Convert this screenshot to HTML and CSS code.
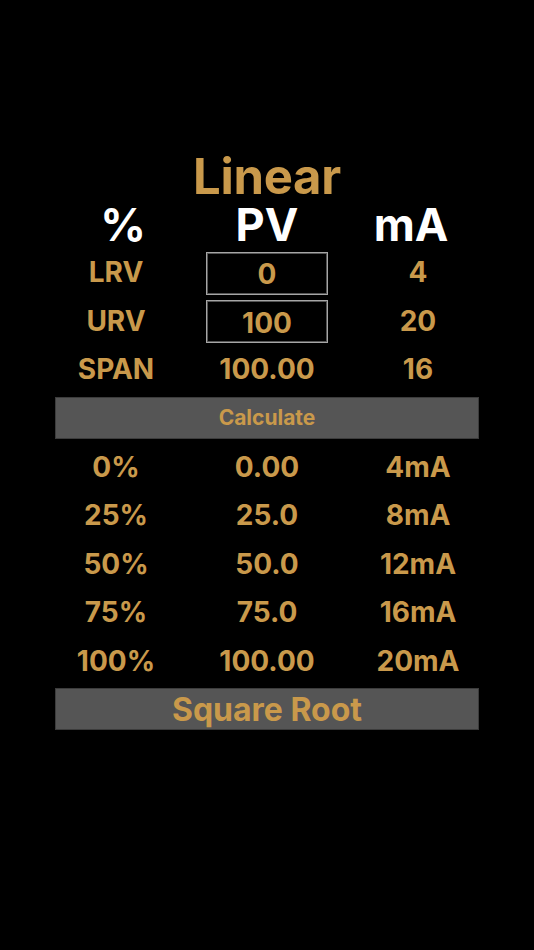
FILE: index.html
```html
<!DOCTYPE html>
<html>
<head>
<meta charset="utf-8">
<link rel="stylesheet" href="styles.css">
</head>
<body>
<div class="page">
  <h1 class="title">Linear</h1>
  <div class="grid head">
    <div>%</div><div>PV</div><div>mA</div>
  </div>
  <div class="grid rows">
    <div class="cell">LRV</div><div class="cell"><div class="box">0</div></div><div class="cell">4</div>
    <div class="cell">URV</div><div class="cell"><div class="box">100</div></div><div class="cell">20</div>
    <div class="cell">SPAN</div><div class="cell">100.00</div><div class="cell">16</div>
  </div>
  <div class="btn calc">Calculate</div>
  <div class="grid rows results">
    <div class="cell">0%</div><div class="cell">0.00</div><div class="cell">4mA</div>
    <div class="cell">25%</div><div class="cell">25.0</div><div class="cell">8mA</div>
    <div class="cell">50%</div><div class="cell">50.0</div><div class="cell">12mA</div>
    <div class="cell">75%</div><div class="cell">75.0</div><div class="cell">16mA</div>
    <div class="cell">100%</div><div class="cell">100.00</div><div class="cell">20mA</div>
  </div>
  <div class="btn sqrt">Square Root</div>
</div>
</body>
</html>
```
FILE: styles.css
```css
html, body {
  margin: 0;
  padding: 0;
  background: #000;
}
body {
  width: 534px;
  height: 950px;
  font-family: Inter, "Liberation Sans", sans-serif;
  font-weight: 700;
  color: #c9994b;
}
.page {
  width: 453px;
  margin: 0 auto;
  padding-top: 152px;
  display: flex;
  flex-direction: column;
  align-items: center;
}
.title {
  margin: 0;
  font-size: 49px;
  line-height: 50px;
  font-weight: 700;
  letter-spacing: -0.3px;
}
.grid {
  width: 453px;
  display: grid;
  grid-template-columns: repeat(3, 151px);
  text-align: center;
}
.head {
  width: 432px;
  grid-template-columns: repeat(3, 144px);
  color: #fff;
  font-size: 45px;
  line-height: 46px;
  font-weight: 700;
}
.rows {
  grid-auto-rows: 48.5px;
  font-size: 28px;
}
.cell {
  display: flex;
  align-items: center;
  justify-content: center;
}
.box {
  box-sizing: border-box;
  width: 122px;
  height: 43px;
  margin-top: 2px;
  border: 1px solid #a6a6a6;
  box-shadow: inset 0 0 0 1px #555;
  display: flex;
  align-items: center;
  justify-content: center;
  padding-top: 2px;
}
.btn {
  width: 424px;
  height: 42px;
  background: #555;
  border: 1px solid #3c3c3c;
  box-sizing: border-box;
  display: flex;
  align-items: center;
  justify-content: center;
}
.calc {
  margin-top: 3px;
  font-size: 21px;
}
.results {
  margin-top: 4px;
}
.sqrt {
  margin-top: 3px;
  font-size: 32px;
  font-weight: 700;
}
```
